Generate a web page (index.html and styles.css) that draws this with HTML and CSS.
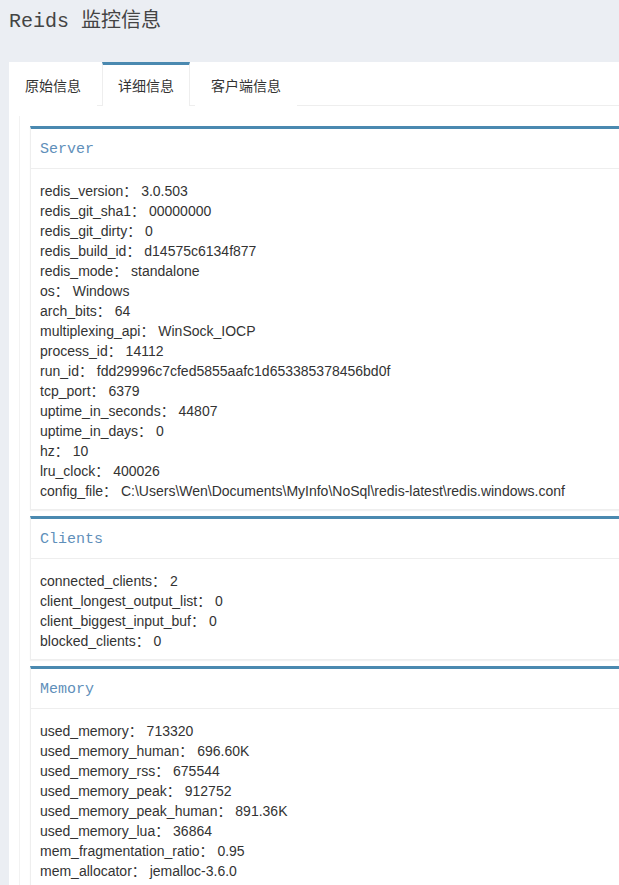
FILE: index.html
```html
<!DOCTYPE html>
<html>
<head>
<meta charset="utf-8">
<title>Reids 监控信息</title>
<link rel="stylesheet" href="styles.css">
</head>
<body>
<div class="header"><h1 class="title">Reids 监控信息</h1></div>
<div class="card">
  <div class="nav">
    <div class="tab">原始信息</div>
    <div class="tab active">详细信息</div>
    <div class="tab">客户端信息</div>
  </div>
  <div class="tab-content">
    <div class="box">
      <div class="panel">
        <div class="panel-heading">Server</div>
        <div class="panel-body">
          <div class="row">redis_version： 3.0.503</div>
          <div class="row">redis_git_sha1： 00000000</div>
          <div class="row">redis_git_dirty： 0</div>
          <div class="row">redis_build_id： d14575c6134f877</div>
          <div class="row">redis_mode： standalone</div>
          <div class="row">os： Windows</div>
          <div class="row">arch_bits： 64</div>
          <div class="row">multiplexing_api： WinSock_IOCP</div>
          <div class="row">process_id： 14112</div>
          <div class="row">run_id： fdd29996c7cfed5855aafc1d653385378456bd0f</div>
          <div class="row">tcp_port： 6379</div>
          <div class="row">uptime_in_seconds： 44807</div>
          <div class="row">uptime_in_days： 0</div>
          <div class="row">hz： 10</div>
          <div class="row">lru_clock： 400026</div>
          <div class="row">config_file： C:\Users\Wen\Documents\MyInfo\NoSql\redis-latest\redis.windows.conf</div>
        </div>
      </div>
      <div class="panel">
        <div class="panel-heading">Clients</div>
        <div class="panel-body">
          <div class="row">connected_clients： 2</div>
          <div class="row">client_longest_output_list： 0</div>
          <div class="row">client_biggest_input_buf： 0</div>
          <div class="row">blocked_clients： 0</div>
        </div>
      </div>
      <div class="panel">
        <div class="panel-heading">Memory</div>
        <div class="panel-body">
          <div class="row">used_memory： 713320</div>
          <div class="row">used_memory_human： 696.60K</div>
          <div class="row">used_memory_rss： 675544</div>
          <div class="row">used_memory_peak： 912752</div>
          <div class="row">used_memory_peak_human： 891.36K</div>
          <div class="row">used_memory_lua： 36864</div>
          <div class="row">mem_fragmentation_ratio： 0.95</div>
          <div class="row">mem_allocator： jemalloc-3.6.0</div>
        </div>
      </div>
    </div>
  </div>
</div>
</body>
</html>
```
FILE: styles.css
```css
html, body {
  margin: 0;
  padding: 0;
  overflow: hidden;
}
body {
  background: #ebeef3;
  font-family: "Liberation Sans", "Noto Sans CJK SC", sans-serif;
  font-size: 14px;
  color: #333;
  width: 619px;
  height: 885px;
}
.header {
  height: 62px;
  box-sizing: border-box;
  padding: 10px 0 0 9px;
}
.title {
  margin: 0;
  font-family: "Liberation Mono", "Noto Sans CJK SC", monospace;
  font-weight: normal;
  font-size: 20px;
  line-height: 24px;
  color: #444;
}
.card {
  margin-left: 9px;
  width: 700px;
  background: #fff;
  border-radius: 4px 0 0 0;
  height: 830px;
}
.nav {
  display: flex;
  height: 43px;
  border-bottom: 1px solid #eeeeee;
}
.tab {
  box-sizing: border-box;
  height: 44px;
  padding: 0 15px;
  margin-right: 5px;
  border-top: 3px solid transparent;
  border-left: 1px solid transparent;
  border-right: 1px solid transparent;
  line-height: 40px;
  font-family: "Noto Sans CJK SC", sans-serif;
  font-size: 14px;
  color: #333;
  background: #fff;
}
.tab.active {
  border-top-color: #4a89b0;
  border-left-color: #eeeeee;
  border-right-color: #eeeeee;
}
.tab-content {
  padding: 10px 0 0 10px;
}
.box {
  border-left: 1px solid #f2f2f2;
  padding: 10px 0 0 10px;
}
.panel {
  border: 1px solid #eeeeee;
  border-top: 3px solid #4a89b0;
  box-shadow: 0 1px 1px rgba(0, 0, 0, 0.05);
  margin-bottom: 6px;
  background: #fff;
}
.panel-heading {
  box-sizing: border-box;
  height: 40px;
  line-height: 39px;
  padding: 1px 0 0 9px;
  border-bottom: 1px solid #eeeeee;
  font-family: "Liberation Mono", monospace;
  font-size: 15px;
  color: #5f8fba;
}
.panel-body {
  padding: 12px 9px 8px;
}
.row {
  line-height: 20px;
  white-space: nowrap;
}
```
